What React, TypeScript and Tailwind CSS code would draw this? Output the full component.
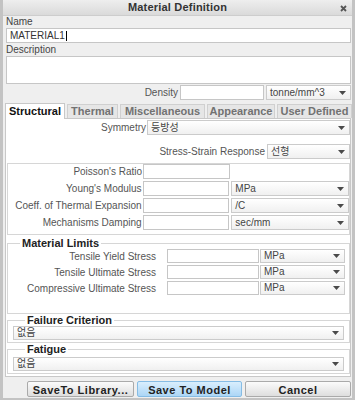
function Arrow() {
  return (
    <svg width="7" height="4" viewBox="0 0 7 4" aria-hidden="true">
      <path d="M0 0h7L3.5 4z" fill="#4a4a4a" />
    </svg>
  );
}

function Select({ value, className = "" }: { value: string; className?: string }) {
  return (
    <div
      className={`flex items-center justify-between h-full border border-[#cbcbcb] bg-gradient-to-b from-white to-[#f0f0f0] pl-[3px] pr-[4px] text-[10px] leading-none text-[#444] ${className}`}
    >
      <span>{value}</span>
      <Arrow />
    </div>
  );
}

function Input({ className = "" }: { className?: string }) {
  return <div className={`h-full border border-[#c6c6c6] bg-white ${className}`} />;
}

function PropRow({ label, unit }: { label: string; unit?: string }) {
  return (
    <div className="flex h-[15px] items-center">
      <span className="w-[135px] pr-[1px] text-right text-[10px] text-[#555]">{label}</span>
      <Input className="w-[87px]" />
      {unit && <Select value={unit} className="ml-[2px] w-[118px]" />}
    </div>
  );
}

function LimitRow({ label }: { label: string }) {
  return (
    <div className="flex h-[14px] items-center">
      <span className="w-[148px] text-right text-[10px] text-[#555]">{label}</span>
      <Input className="ml-[11px] w-[92px]" />
      <Select value="MPa" className="ml-[1px] w-[85px]" />
    </div>
  );
}

function Group({ title, children, className = "" }: { title: string; children: React.ReactNode; className?: string }) {
  return (
    <fieldset className={`ml-[1px] w-[343px] border border-[#d6d6d6] ${className}`}>
      <legend className="ml-[12px] h-[12px] px-[2px] text-[11px] leading-[12px] font-bold text-[#222]">{title}</legend>
      {children}
    </fieldset>
  );
}

const tabs = [
  { name: "Thermal", w: "w-[51px]" },
  { name: "Miscellaneous", w: "w-[85px]" },
  { name: "Appearance", w: "w-[68px]" },
  { name: "User Defined", w: "w-[75px]" },
];

export default function App() {
  return (
    <div className="w-[355px] h-[400px] bg-[#c3c3c3] px-[3px] pb-[2px] font-['Liberation_Sans','Noto_Sans_CJK_KR',sans-serif]">
      <div className="flex h-full flex-col bg-[#efefef]">
        {/* title bar */}
        <div className="relative flex h-[16px] items-center justify-center border-b border-[#cdcdcd] bg-gradient-to-b from-[#eeeeee] to-[#dadada]">
          <span className="text-[11px] font-bold tracking-[0.2px] text-[#333]">Material Definition</span>
          <svg className="absolute right-[5px] top-[5px]" width="7" height="7" viewBox="0 0 7 7" aria-hidden="true">
            <path d="M1 1l5 5M6 1L1 6" stroke="#555" strokeWidth="1.8" />
          </svg>
        </div>

        <div className="pl-[3px] pr-[1px]">
          <div className="h-[12px] text-[10px] leading-[12px] text-[#444]">Name</div>
          <div className="flex h-[15px] items-center border border-[#c6c6c6] bg-white pl-[3px] text-[10px] text-[#333]">
            MATERIAL1<span className="ml-[1px] h-[10px] w-px bg-black" />
          </div>
          <div className="mt-[1px] h-[12px] text-[10px] leading-[12px] text-[#444]">Description</div>
          <div className="h-[28px] border border-[#c6c6c6] bg-white" />
          <div className="mt-[1px] flex h-[15px] items-center justify-end">
            <span className="mr-[2px] text-[10px] text-[#555]">Density</span>
            <Input className="w-[84px]" />
            <Select value="tonne/mm^3" className="ml-[2px] w-[85px]" />
          </div>
        </div>

        {/* tabs */}
        <div className="ml-[2px] mt-[3px] flex h-[15px] items-end gap-[2px]">
          <div className="relative z-10 -mb-px flex h-[16px] w-[60px] items-center justify-center border border-b-0 border-[#c8c8c8] bg-white text-[11px] font-bold text-[#111]">
            Structural
          </div>
          {tabs.map((t) => (
            <div
              key={t.name}
              className={`flex h-[14px] ${t.w} items-center justify-center border border-b-0 border-[#d0d0d0] bg-[#e6e6e6] text-[11px] font-bold text-[#727272]`}
            >
              {t.name}
            </div>
          ))}
        </div>

        <div className="ml-[2px] w-[346px] border border-[#c8c8c8] bg-white pb-[2px]">
          <div className="mt-[1px] flex h-[15px] items-center">
            <span className="w-[140px] text-right text-[10px] text-[#555]">Symmetry</span>
            <Select value="등방성" className="ml-[1px] flex-1" />
          </div>
          <div className="mt-[9px] flex h-[15px] items-center justify-end">
            <span className="mr-[2px] text-[10px] text-[#555]">Stress-Strain Response</span>
            <Select value="선형" className="w-[83px]" />
          </div>

          <div className="ml-[1px] mt-[4px] flex w-[343px] flex-col gap-[2px] border border-[#d6d6d6] pb-[4px]">
            <PropRow label="Poisson's Ratio" />
            <PropRow label="Young's Modulus" unit="MPa" />
            <PropRow label="Coeff. of Thermal Expansion" unit="/C" />
            <PropRow label="Mechanisms Damping" unit="sec/mm" />
          </div>

          <Group title="Material Limits" className="mt-[2px] pb-[18px]">
            <div className="flex flex-col gap-[2px]">
              <LimitRow label="Tensile Yield Stress" />
              <LimitRow label="Tensile Ultimate Stress" />
              <LimitRow label="Compressive Ultimate Stress" />
            </div>
          </Group>

          <Group title="Failure Criterion" className="px-[5px] pb-[2px]">
            <div className="h-[14px]">
              <Select value="없음" />
            </div>
          </Group>

          <Group title="Fatigue" className="px-[5px] pb-[2px]">
            <div className="mt-[2px] h-[14px]">
              <Select value="없음" />
            </div>
          </Group>
        </div>

        <div className="mt-[4px] flex justify-end gap-[3px] pr-[1px]">
          <button className="h-[16px] w-[107px] rounded-[2px] border border-[#aaaaaa] bg-gradient-to-b from-[#fbfbfb] to-[#dedede] text-[11px] font-bold tracking-[0.5px] text-[#222]">
            SaveTo Library...
          </button>
          <button className="h-[16px] w-[105px] rounded-[2px] border border-[#86bce4] bg-gradient-to-b from-[#d9eefd] to-[#acd6f6] text-[11px] font-bold tracking-[0.5px] text-[#222]">
            Save To Model
          </button>
          <button className="h-[16px] w-[106px] rounded-[2px] border border-[#aaaaaa] bg-gradient-to-b from-[#fbfbfb] to-[#dedede] text-[11px] font-bold tracking-[0.5px] text-[#222]">
            Cancel
          </button>
        </div>
      </div>
    </div>
  );
}
